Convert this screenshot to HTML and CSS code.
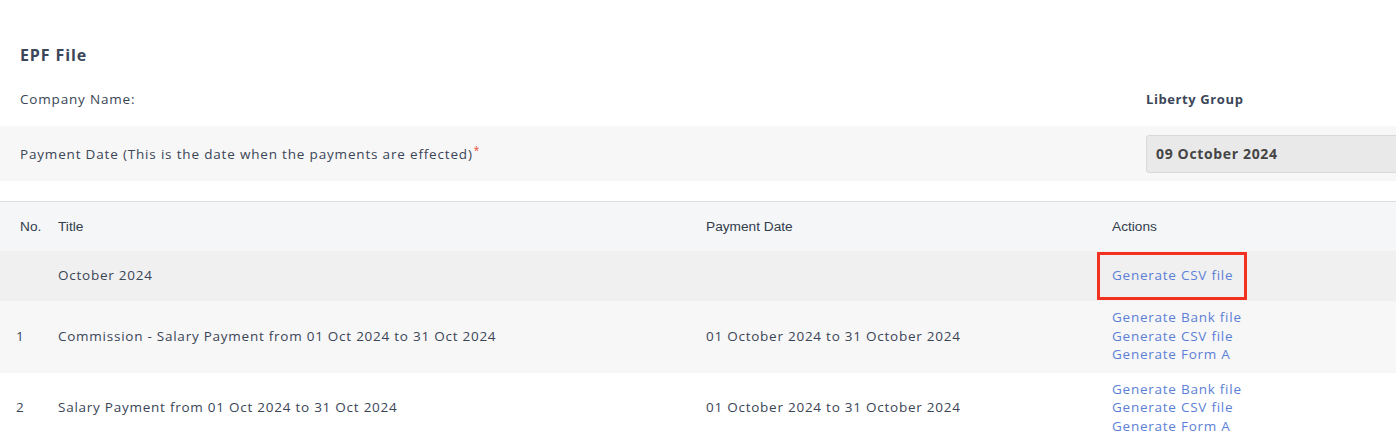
FILE: index.html
```html
<!DOCTYPE html>
<html lang="en">
<head>
<meta charset="utf-8">
<title>EPF File</title>
<link rel="stylesheet" href="styles.css">
</head>
<body>
<div class="page">
  <h2 class="page-title">EPF File</h2>
  <div class="field-row">
    <div class="field-label">Company Name:</div>
    <div class="field-value">Liberty Group</div>
  </div>
  <div class="field-row shaded">
    <div class="field-label">Payment Date (This is the date when the payments are effected)<span class="req">*</span></div>
    <div class="field-value"><div class="date-input">09 October 2024</div></div>
  </div>

  <table class="files">
    <colgroup>
      <col class="c-no"><col class="c-title"><col class="c-date"><col class="c-actions">
    </colgroup>
    <thead>
      <tr>
        <th class="no">No.</th>
        <th>Title</th>
        <th>Payment Date</th>
        <th>Actions</th>
      </tr>
    </thead>
    <tbody>
      <tr class="group">
        <td class="no"></td>
        <td>October 2024</td>
        <td></td>
        <td class="actions"><div class="highlight-wrap"><a href="#">Generate CSV file</a><span class="highlight"></span></div></td>
      </tr>
      <tr class="alt">
        <td class="no num">1</td>
        <td>Commission - Salary Payment from 01 Oct 2024 to 31 Oct 2024</td>
        <td>01 October 2024 to 31 October 2024</td>
        <td class="actions"><a href="#">Generate Bank file</a><a href="#">Generate CSV file</a><a href="#">Generate Form A</a></td>
      </tr>
      <tr>
        <td class="no num">2</td>
        <td>Salary Payment from 01 Oct 2024 to 31 Oct 2024</td>
        <td>01 October 2024 to 31 October 2024</td>
        <td class="actions"><a href="#">Generate Bank file</a><a href="#">Generate CSV file</a><a href="#">Generate Form A</a></td>
      </tr>
    </tbody>
  </table>
</div>
</body>
</html>
```

FILE: styles.css
```css
html, body {
  margin: 0;
  padding: 0;
  background: #ffffff;
  overflow: hidden;
}
body {
  font-family: "Open Sans", "DejaVu Sans", sans-serif;
  font-size: 13.5px;
  color: #3a4556;
  letter-spacing: 0.75px;
}
.page {
  width: 1396px;
  padding-top: 43px;
}
.page-title {
  margin: 0 0 0 20px;
  font-size: 16px;
  font-weight: 700;
  letter-spacing: 0.9px;
  line-height: 24px;
  color: #3b4759;
}
.field-row {
  display: grid;
  grid-template-columns: 1126px 1fr;
  padding-left: 20px;
  align-items: center;
}
.page-title + .field-row {
  height: 54px;
  margin-top: 5px;
}
.field-row.shaded {
  background: #f7f7f7;
  height: 55px;
}
.field-label {
  letter-spacing: 0.82px;
}
.field-value {
  font-weight: 700;
  font-size: 13px;
  letter-spacing: 0.6px;
  color: #3b4759;
}
.req {
  color: #e8452c;
  font-size: 10px;
  vertical-align: top;
  position: relative;
  top: -2px;
  margin-left: 1px;
}
.date-input {
  box-sizing: border-box;
  width: 300px;
  height: 38px;
  line-height: 36px;
  padding-left: 9px;
  background: #e9e9e9;
  border: 1px solid #d9d9d9;
  border-radius: 3px;
  font-size: 14px;
  letter-spacing: 0.65px;
  color: #454545;
  font-weight: 700;
}
.files {
  margin-top: 20px;
  width: 1396px;
  border-collapse: collapse;
  table-layout: fixed;
  border-top: 1px solid #dcdde0;
}
.c-no { width: 58px; }
.c-title { width: 648px; }
.c-date { width: 406px; }
.c-actions { width: 284px; }
.files th {
  text-align: left;
  font-family: "Liberation Sans", Arial, sans-serif;
  font-weight: 400;
  font-size: 13.7px;
  letter-spacing: 0;
  color: #333d4c;
  height: 49px;
  padding: 0;
  background: #f5f6f8;
}
.files th.no { padding-left: 20px; }
.files td {
  padding: 0 0 2px 0;
  vertical-align: middle;
}
.files td.num { padding-left: 16px; }
.files tr.group td {
  height: 48px;
  background: #f0f0f0;
}
.files tr.alt td {
  background: #f7f7f8;
}
.files td.actions {
  padding: 7px 0 9px 0;
}
.files tr.group td.actions { padding: 0 0 2px 0; }
.files a {
  display: block;
  color: #5c7fd6;
  text-decoration: none;
  line-height: 18.5px;
}
.highlight-wrap {
  position: relative;
}
.highlight {
  position: absolute;
  left: -15px;
  top: -14px;
  width: 150px;
  height: 48px;
  box-sizing: border-box;
  border: 3px solid #f2321f;
  pointer-events: none;
}
```
